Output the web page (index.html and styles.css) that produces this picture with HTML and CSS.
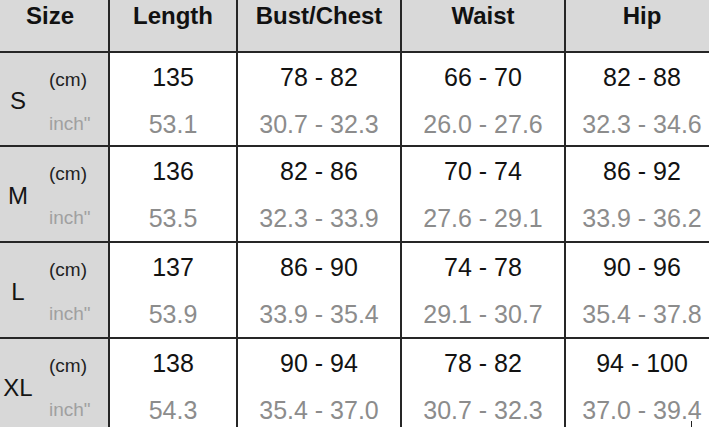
FILE: index.html
```html
<!DOCTYPE html>
<html>
<head>
<meta charset="utf-8">
<link rel="stylesheet" href="styles.css">
</head>
<body>
<div class="chart">
  <div class="grid">
    <div class="hd hd-size">Size</div>
    <div class="hd">Length</div>
    <div class="hd">Bust/Chest</div>
    <div class="hd">Waist</div>
    <div class="hd">Hip</div>

    <div class="sz"><span class="letter">S</span><span class="units"><span class="u-cm">(cm)</span><span class="u-in">inch"</span></span></div>
    <div class="val"><span class="cm">135</span><span class="in">53.1</span></div>
    <div class="val"><span class="cm">78 - 82</span><span class="in">30.7 - 32.3</span></div>
    <div class="val"><span class="cm">66 - 70</span><span class="in">26.0 - 27.6</span></div>
    <div class="val"><span class="cm">82 - 88</span><span class="in">32.3 - 34.6</span></div>

    <div class="sz"><span class="letter">M</span><span class="units"><span class="u-cm">(cm)</span><span class="u-in">inch"</span></span></div>
    <div class="val"><span class="cm">136</span><span class="in">53.5</span></div>
    <div class="val"><span class="cm">82 - 86</span><span class="in">32.3 - 33.9</span></div>
    <div class="val"><span class="cm">70 - 74</span><span class="in">27.6 - 29.1</span></div>
    <div class="val"><span class="cm">86 - 92</span><span class="in">33.9 - 36.2</span></div>

    <div class="sz"><span class="letter">L</span><span class="units"><span class="u-cm">(cm)</span><span class="u-in">inch"</span></span></div>
    <div class="val"><span class="cm">137</span><span class="in">53.9</span></div>
    <div class="val"><span class="cm">86 - 90</span><span class="in">33.9 - 35.4</span></div>
    <div class="val"><span class="cm">74 - 78</span><span class="in">29.1 - 30.7</span></div>
    <div class="val"><span class="cm">90 - 96</span><span class="in">35.4 - 37.8</span></div>

    <div class="sz"><span class="letter">XL</span><span class="units"><span class="u-cm">(cm)</span><span class="u-in">inch"</span></span></div>
    <div class="val"><span class="cm">138</span><span class="in">54.3</span></div>
    <div class="val"><span class="cm">90 - 94</span><span class="in">35.4 - 37.0</span></div>
    <div class="val"><span class="cm">78 - 82</span><span class="in">30.7 - 32.3</span></div>
    <div class="val"><span class="cm">94 - 100</span><span class="in">37.0 - 39.4</span></div>
  </div>
  <div class="tick"></div>
</div>
</body>
</html>
```

FILE: styles.css
```css
html, body {
  margin: 0;
  padding: 0;
  background: #ffffff;
  overflow: hidden;
}

.chart {
  position: relative;
  width: 709px;
  height: 427px;
  overflow: hidden;
  font-family: "Liberation Sans", Arial, sans-serif;
}

.grid {
  display: grid;
  grid-template-columns: 108px 126px 162px 162px 152px;
  grid-template-rows: 51px 92px 94px 94px 94px;
  column-gap: 2px;
  row-gap: 2px;
  background: #262626;
  width: 718px;
}

.hd {
  background: #d9d9d9;
  color: #111111;
  font-weight: bold;
  font-size: 24px;
  line-height: 28px;
  padding-top: 2px;
  text-align: center;
}

.hd-size {
  padding-right: 8px;
}

.sz {
  background: #d8d8d8;
  display: flex;
  flex-direction: row;
}

.letter {
  width: 36px;
  align-self: center;
  text-align: center;
  font-size: 24px;
  line-height: 28px;
  color: #151515;
  margin-top: 4px;
}

.units {
  margin-left: 13px;
  display: flex;
  flex-direction: column;
  font-size: 19px;
  line-height: 44px;
  padding-top: 5px;
}

.u-cm {
  color: #222222;
}

.u-in {
  color: #a0a0a0;
}

.val {
  background: #ffffff;
  display: flex;
  flex-direction: column;
  align-items: center;
  font-size: 25px;
  line-height: 47px;
  padding-top: 1px;
}

.cm {
  color: #121212;
}

.in {
  color: #8c8c8c;
}

.tick {
  position: absolute;
  left: 691px;
  top: 421px;
  width: 1px;
  height: 6px;
  background: #222222;
}
```
